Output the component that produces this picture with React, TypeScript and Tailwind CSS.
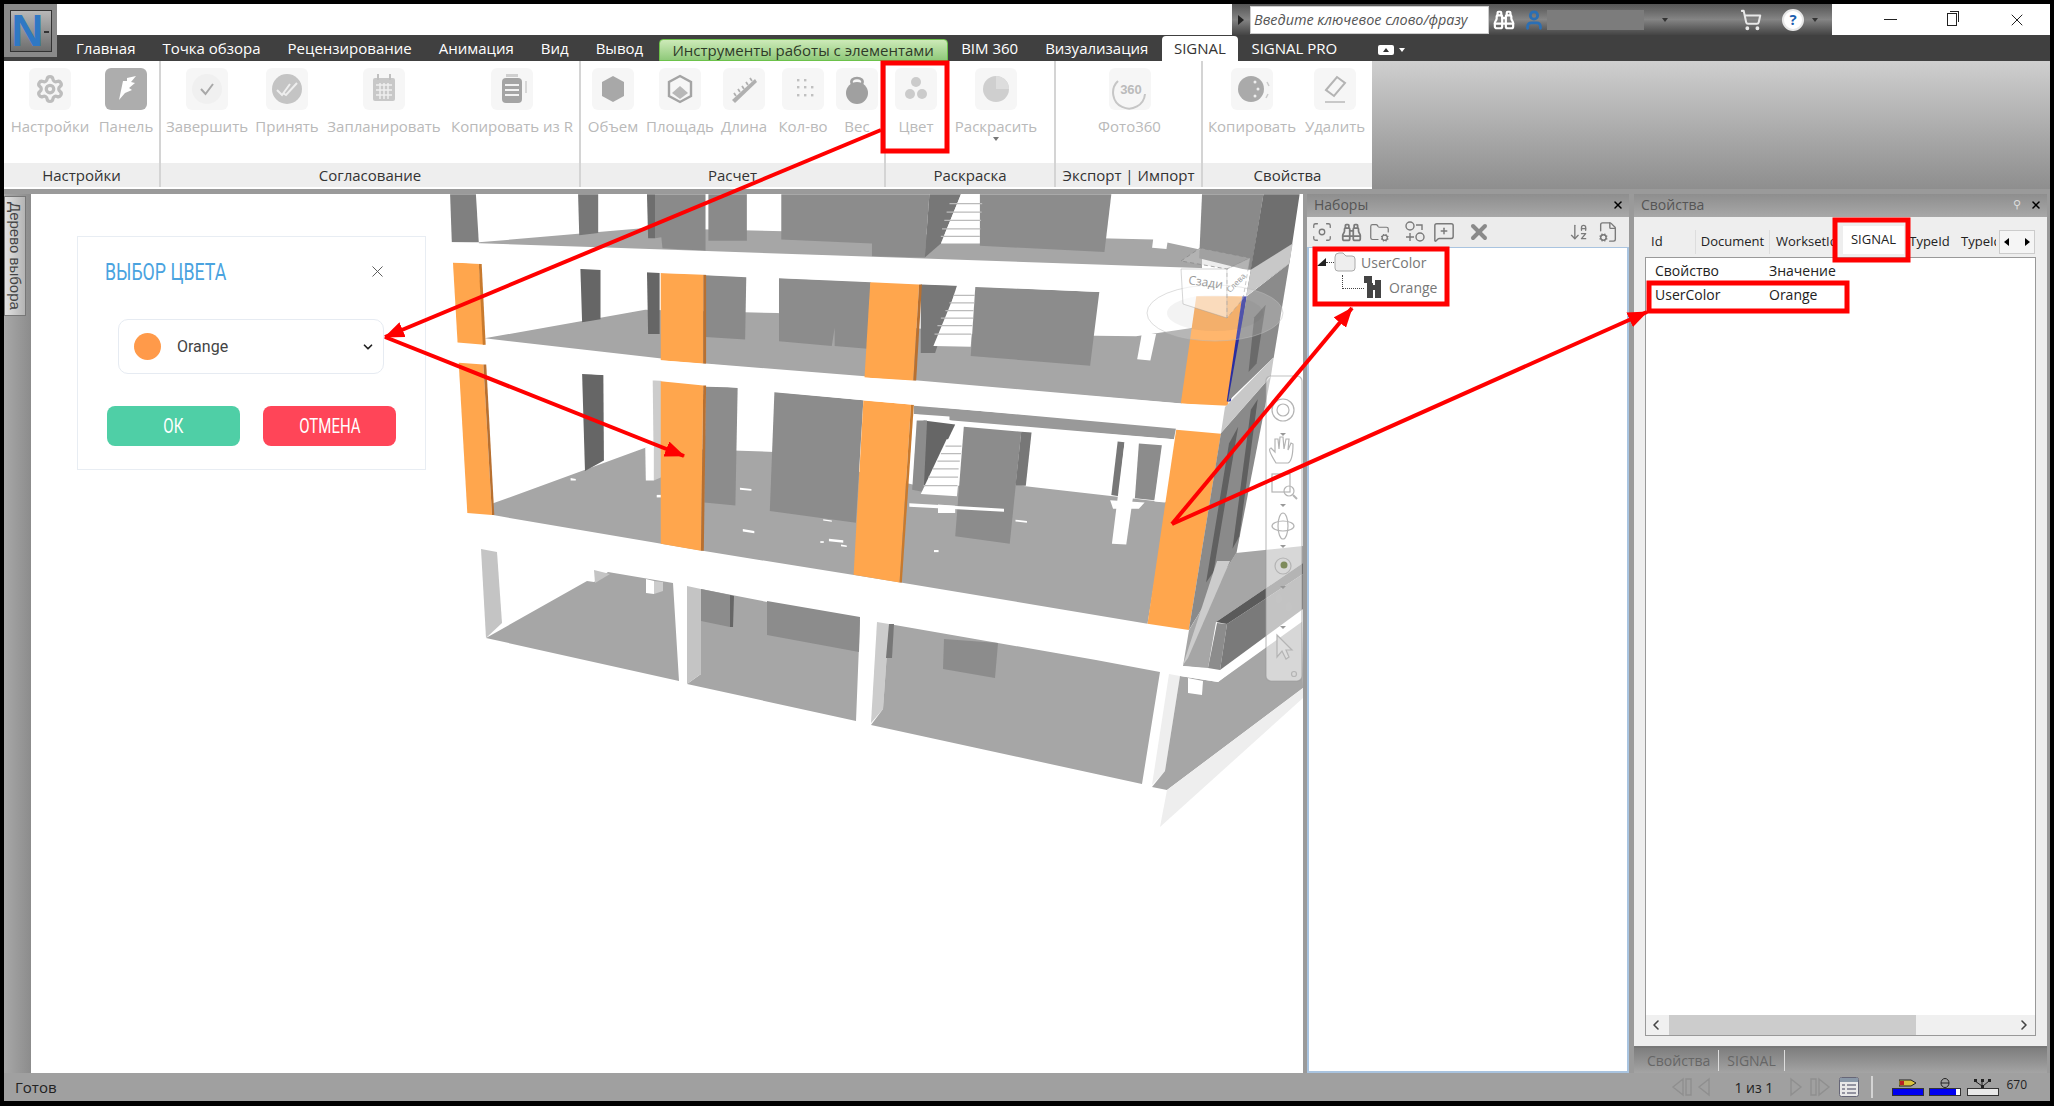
import { ArrowDownAZ, Binoculars, ChevronDown, ChevronLeft, ChevronRight, FileCog, Focus, FolderCog, MessageSquarePlus, Settings, ShoppingCart, User, X } from "lucide-react";

const leftTabs = ["Главная", "Точка обзора", "Рецензирование", "Анимация", "Вид", "Вывод"];

// upper floors are traced in a stretched space, see the transform on their <g>
const model: [string, string][] = [
    // top level
    ["#a6a6a6", "85,122 375,88 1260,115 1345,140 1345,190 85,140"],
    ["#808080", "35,8 80,8 85,122 38,122"],
    ["#777777", "258,8 293,8 293,100 260,105"],
    ["#6e6e6e", "378,8 392,8 392,112 380,112"],
    ["#8a8a8a", "392,8 480,8 480,142 405,136 403,110 392,112"],
    ["#8a8a8a", "485,8 552,8 552,118 485,118"],
    ["#8c8c8c", "612,8 870,8 862,158 770,155 770,125 612,115"],
    ["#777777", "870,8 925,8 890,125 862,158"],
    ["#ffffff", "925,8 965,8 958,125 890,125"],
    ["#8c8c8c", "958,8 1187,8 1175,145 958,130"],
    ["#ffffff", "1270,8 1298,8 1283,138 1258,135"],
    ["#8a8a8a", "1345,8 1452,8 1430,190 1340,160"],
    ["#6f6f6f", "1452,8 1515,8 1497,172 1420,250 1430,185"],
    // second level
    ["#a6a6a6", "95,350 375,282 605,290 940,340 1230,345 1330,325 1310,505 850,450 480,410"],
    ["#666666", "262,185 297,185 297,305 265,312"],
    ["#666666", "378,192 400,192 400,340 380,340"],
    ["#8a8a8a", "480,200 551,205 549,353 480,347"],
    ["#8c8c8c", "608,207 768,217 762,375 705,368 705,325 700,368 608,357"],
    ["#777777", "855,222 918,225 880,385 855,385"],
    ["#ffffff", "918,232 950,232 942,370 877,368"],
    ["#8c8c8c", "950,228 1166,240 1150,415 942,392"],
    ["#ffffff", "1240,340 1265,340 1255,403 1232,400"],
    ["#ffa64d", "40,170 85,172 95,365 48,360"],
    ["#c87a2e", "85,172 90,172 97,365 92,365"],
    ["#ffa64d", "402,195 476,197 476,410 402,402"],
    ["#b87030", "476,197 481,197 481,410 476,410"],
    ["#ffa64d", "767,217 852,222 842,450 757,443"],
    ["#b87030", "852,222 857,222 847,450 842,450"],
    ["#ffa64d", "1335,250 1415,250 1390,510 1308,505"],
    ["#2a2ea0", "1415,250 1423,250 1395,500 1388,500"],
    ["#8b8b8b", "1423,250 1497,172 1470,395 1390,500"],
    ["#6a6a6a", "1436,300 1456,270 1440,410 1426,430"],
    // first level
    ["#a6a6a6", "110,742 375,610 600,620 850,700 1030,700 1190,725 1285,740 1250,1028 820,930 475,855 110,770"],
    ["#666666", "265,435 302,437 303,640 270,665"],
    ["#cccccc", "388,450 403,450 403,680 390,688"],
    ["#ffffff", "375,610 390,605 390,688 376,688"],
    ["#8c8c8c", "480,465 536,467 532,747 478,740"],
    ["#8c8c8c", "600,478 755,497 742,788 592,760"],
    ["#999999", "843,510 1300,560 1296,590 910,545 843,530"],
    ["#ffffff", "843,530 905,536 905,548 843,542"],
    ["#ffffff", "905,548 1296,590 1296,600 905,556"],
    ["#666666", "860,545 915,555 860,710"],
    ["#8c8c8c", "848,545 866,545 860,715 840,710"],
    ["#ffffff", "900,590 928,590 918,725 855,720"],
    ["#8c8c8c", "930,560 1030,572 1010,838 915,820"],
    ["#777777", "1030,572 1048,574 1038,700 1020,700"],
    ["#777777", "1198,595 1210,597 1200,725 1187,722"],
    ["#ffffff", "1210,597 1238,600 1213,840 1188,838"],
    ["#8c8c8c", "1235,600 1275,604 1262,735 1228,730"],
    ["#ffffff", "1282,610 1296,600 1280,740 1262,738"],
    ["#ffffff", "1185,735 1245,740 1235,755 1190,755"],
    ["#ffffff", "835,742 1000,755 1000,762 835,750"],
    ["#ffffff", "885,745 915,748 915,765 885,765"],
    ["#ffffff", "245,682 254,684 254,688 245,688"],
    ["#ffffff", "395,722 404,722 404,728 395,728"],
    ["#ffffff", "540,705 560,708 560,712 540,710"],
    ["#ffffff", "545,803 565,808 565,813 545,809"],
    ["#ffffff", "695,826 720,830 720,836 695,832"],
    ["#ffffff", "680,832 686,832 686,836 680,836"],
    ["#ffffff", "716,840 726,842 726,846 716,844"],
    ["#ffffff", "685,780 700,783 700,786 685,783"],
    ["#ffffff", "1020,781 1040,784 1040,788 1020,785"],
    ["#ffffff", "878,853 886,853 886,858 878,858"],
    ["#ffa64d", "50,408 93,412 108,770 65,765"],
    ["#b87030", "93,412 98,412 112,770 108,770"],
    ["#ffa64d", "402,452 476,462 472,855 402,838"],
    ["#b87030", "476,462 481,462 477,855 472,855"],
    ["#ffa64d", "755,498 838,507 818,930 738,912"],
    ["#c87a2e", "838,507 843,507 822,930 818,930"],
    ["#ffa64d", "1300,567 1378,577 1322,1043 1250,1028"],
    ["#8a8a8a", "1378,575 1465,440 1405,860 1322,1043"],
    ["#606060", "1392,600 1408,560 1365,905 1352,930"],
    ["#5f5f5f", "1430,520 1442,495 1410,820 1398,850"],
    // slabs go over the columns
    ["#ffffff", "35,122 320,135 1430,187 1422,250 1165,240 765,215 400,195 40,170"],
    ["#c8c8c8", "1430,187 1503,125 1497,172 1422,250"],
    ["#ffffff", "45,362 400,402 757,443 1308,505 1385,513 1378,575 1300,565 760,498 400,450 50,405"],
    ["#c8c8c8", "1385,513 1470,395 1465,440 1378,575"],
];

// ground floor, in page pixels
const ground: [string, string][] = [
    ["#a6a6a6", "486,637 587,580 594,581 608,571 673,582 679,680"],
    ["#c4c4c4", "481,548 497,551 502,622 486,637"],
    ["#c4c4c4", "594,569 610,573 595,582"],
    ["#ffffff", "646,578 654,580 654,593 646,592"],
    ["#cccccc", "654,580 663,581 663,590 654,593"],
    ["#a6a6a6", "687,683 701,673 701,588 860,619 856,720"],
    ["#c4c4c4", "687,585 701,588 701,673 687,683"],
    ["#8c8c8c", "701,588 730,594 730,626 701,620"],
    ["#666666", "730,594 734,595 733,626 730,626"],
    ["#8c8c8c", "767,600 860,616 859,651 767,634"],
    ["#cccccc", "877,621 889,623 883,708 871,722"],
    ["#a6a6a6", "883,708 889,623 1096,659 1160,671 1142,783 871,724"],
    ["#777777", "889,623 894,623 892,657 886,657"],
    ["#8c8c8c", "944,638 998,642 995,677 943,668"],
    ["#eeeeee", "1169,673 1180,675 1165,770 1152,784"],
    ["#a6a6a6", "1180,675 1218,681 1302,615 1303,687 1167,789 1152,786 1165,770"],
    ["#eeeeee", "1167,789 1303,687 1303,697 1160,826"],
    ["#ffffff", "1188,677 1203,680 1202,694 1188,692"],
    ["#a6a6a6", "1236,552 1303,545 1303,562 1216,621 1208,667 1183,665 1189,629"],
    ["#cccccc", "1217,560 1230,560 1188,657 1183,664"],
    ["#ffffff", "1183,665 1220,669 1303,608 1303,620 1218,681 1180,675"],
    ["#8c8c8c", "1217,622 1227,623 1220,669 1208,667"],
    ["#7a7a7a", "1227,623 1303,573 1303,608 1220,669"],
    ["#5a5a5a", "1216,621 1303,562 1303,573 1227,623"],
];

// tread lines of the three flights of stairs
const stairLines = [
    "M905 30 H962 M900 50 H961 M896 70 H960 M892 90 H959 M890 108 H958",
    "M912 248 H949 M905 266 H948 M898 284 H947 M890 302 H946 M884 320 H945 M879 340 H943",
    "M898 606 H926 M890 624 H925 M884 642 H923 M876 660 H921 M868 680 H920 M860 700 H919",
];

const ribbon = [
    {
        title: "Настройки",
        box: "w-[157px] pl-3 gap-2",
        items: [
            { label: "Настройки", icon: "gear", w: "w-[68px]" },
            { label: "Панель", icon: "panel", w: "w-[68px]" },
        ],
    },
    {
        title: "Согласование",
        box: "w-[420px] pl-[5px] gap-[7px]",
        items: [
            { label: "Завершить", icon: "done", w: "w-[82px]" },
            { label: "Принять", icon: "accept", w: "w-[64px]" },
            { label: "Запланировать", icon: "calendar", w: "w-[116px]" },
            { label: "Копировать из R", icon: "clip", w: "w-[126px]" },
        ],
    },
    {
        title: "Расчет",
        box: "w-[305px] pl-[5px] gap-1",
        items: [
            { label: "Объем", icon: "hex", w: "w-[54px]" },
            { label: "Площадь", icon: "area", w: "w-[72px]" },
            { label: "Длина", icon: "ruler", w: "w-[48px]" },
            { label: "Кол-во", icon: "dots", w: "w-[62px]" },
            { label: "Вес", icon: "weight", w: "w-[38px]" },
        ],
    },
    {
        title: "Раскраска",
        box: "w-[170px] pl-1 gap-1",
        items: [
            { label: "Цвет", icon: "color", w: "w-[52px]" },
            { label: "Раскрасить", icon: "paint", w: "w-[100px]", more: true },
        ],
    },
    {
        title: "Экспорт | Импорт",
        box: "w-[147px] justify-center",
        items: [{ label: "Фото360", icon: "photo", w: "w-[90px]" }],
    },
    {
        title: "Свойства",
        box: "w-[169px] pl-1 gap-[3px]",
        items: [
            { label: "Копировать", icon: "copy", w: "w-[90px]" },
            { label: "Удалить", icon: "erase", w: "w-[70px]" },
        ],
    },
];

function RibbonIcon({ name }: { name: string }) {
    if (name === "gear") return <Settings size={30} strokeWidth={2.6} color="#bdbdbd" />;
    return (
        <svg width="42" height="42" viewBox="0 0 42 42">
            {name === "panel" && <path d="M14 32 L18 13 L22 13 L22 10 L31 8 L26 14 L30 15 L24 20 L27 22 L20 25 Z" fill="#ffffff" />}
            {name === "done" && (
                <>
                    <circle cx="21" cy="21" r="15" fill="#f0f0f0" />
                    <path d="M15 21 L19.5 26 L27 16" stroke="#a8a8a8" strokeWidth="2" fill="none" />
                </>
            )}
            {name === "accept" && (
                <>
                    <circle cx="21" cy="21" r="15" fill="#c4c4c4" />
                    <path d="M11 22 L16 27 L24 16 M17 25 L20 27 L31 15" stroke="#eeeeee" strokeWidth="2" fill="none" />
                </>
            )}
            {name === "calendar" && (
                <>
                    <rect x="10" y="10" width="22" height="23" rx="2" fill="#c8c8c8" />
                    <path d="M15 6 V12 M27 6 V12" stroke="#c0c0c0" strokeWidth="2" />
                    <path d="M13 17 H29 M13 22 H29 M13 27 H29 M17 15 V31 M21 15 V31 M25 15 V31" stroke="#eeeeee" strokeWidth="1.5" />
                </>
            )}
            {name === "clip" && (
                <>
                    <rect x="11" y="10" width="20" height="25" rx="4" fill="#a4a4a4" />
                    <rect x="15" y="6" width="12" height="3" fill="#d0d0d0" />
                    <path d="M14 17 H28 M14 22 H28 M14 27 H28" stroke="#f2f2f2" strokeWidth="2" />
                    <path d="M35 13 V25" stroke="#cccccc" strokeWidth="1.5" />
                </>
            )}
            {name === "hex" && <path d="M21 8 L32 14 V28 L21 34 L10 28 V14 Z" fill="#a8a8a8" />}
            {name === "area" && (
                <>
                    <path d="M21 8 L32 14 V28 L21 34 L10 28 V14 Z" fill="none" stroke="#a4a4a4" strokeWidth="2.4" />
                    <path d="M21 18 L29 25 L21 31 L13 25 Z" fill="#b8b8b8" />
                </>
            )}
            {name === "ruler" && (
                <>
                    <path d="M9 32 L32 11 L34 14 L12 35 Z" fill="#b0b0b0" />
                    <path d="M13 28 L11 25 M17 24 L15 21 M21 21 L19 18 M25 17 L23 14 M29 13 L27 10" stroke="#b0b0b0" strokeWidth="1.8" />
                </>
            )}
            {name === "dots" && (
                <g fill="#c0c0c0">
                    {[[15, 11], [22, 11], [15, 18], [22, 18], [29, 18], [15, 26], [22, 26], [29, 26]].map(([x, y]) => (
                        <rect key={`${x}-${y}`} x={x} y={y} width="2.4" height="2.4" />
                    ))}
                </g>
            )}
            {name === "weight" && (
                <>
                    <path d="M16 16 C12 8 30 8 26 16" fill="none" stroke="#a0a0a0" strokeWidth="2.6" />
                    <ellipse cx="21" cy="25" rx="11" ry="11" fill="#a0a0a0" />
                </>
            )}
            {name === "color" && (
                <g fill="#cbcbcb">
                    <circle cx="21" cy="14" r="5" />
                    <circle cx="15" cy="26" r="5" />
                    <circle cx="27" cy="26" r="5" />
                </g>
            )}
            {name === "paint" && (
                <>
                    <circle cx="21" cy="21" r="13" fill="#cfcfcf" />
                    <path d="M21 21 V8 A13 13 0 0 1 34 21 Z" fill="#dddddd" />
                </>
            )}
            {name === "photo" && (
                <>
                    <path d="M9 13 A16 16 0 1 0 36 26" fill="none" stroke="#c6c6c6" strokeWidth="2" />
                    <text x="22" y="26" textAnchor="middle" fontSize="13" fontWeight="700" fill="#bbbbbb" fontFamily="Liberation Sans, sans-serif">360</text>
                </>
            )}
            {name === "copy" && (
                <>
                    <circle cx="20" cy="21" r="13" fill="#aaaaaa" />
                    <circle cx="24" cy="14" r="1.5" fill="#eeeeee" />
                    <circle cx="27" cy="21" r="1.5" fill="#eeeeee" />
                    <circle cx="24" cy="28" r="1.5" fill="#eeeeee" />
                    <path d="M36 14 L38 18 M37 26 L35 30" stroke="#cccccc" strokeWidth="1.5" />
                </>
            )}
            {name === "erase" && (
                <>
                    <path d="M12 22 L23 9 L31 15 L20 28 Z" fill="none" stroke="#b4b4b4" strokeWidth="2" />
                    <path d="M11 34 H31" stroke="#c8c8c8" strokeWidth="2" />
                </>
            )}
        </svg>
    );
}

function Ribbon() {
    return (
        <div className="flex h-[128px] shrink-0">
            <div className="flex bg-white pb-[2px]">
                {ribbon.map((group) => (
                    <div key={group.title} className={`flex flex-col border-r-2 border-[#d4d4d4] last:border-r-0 ${group.box.split(" ")[0]}`}>
                        <div className={`flex flex-1 pt-[7px] ${group.box}`}>
                            {group.items.map((item) => (
                                <div key={item.label} className={`flex flex-col items-center ${item.w}`}>
                                    <div className={`flex h-[42px] w-[42px] items-center justify-center rounded-md ${item.icon === "panel" ? "bg-[#adadad]" : "bg-[#f6f6f6]"}`}>
                                        <RibbonIcon name={item.icon} />
                                    </div>
                                    <span className="mt-[6px] whitespace-nowrap text-[15px] leading-5 text-[#b9b9b9]">{item.label}</span>
                                    {"more" in item && <span className="mt-[1px] h-0 w-0 border-x-[3px] border-t-[4px] border-x-transparent border-t-[#777]" />}
                                </div>
                            ))}
                        </div>
                        <div className="flex h-[24px] items-center justify-center whitespace-nowrap bg-[#eeeeee] text-[15px] text-[#333]">{group.title}</div>
                    </div>
                ))}
            </div>
            <div className="flex-1 bg-linear-to-b from-[#cfcfcf] to-[#8e8e8e]" />
        </div>
    );
}

function TitleBar() {
    return (
        <div className="flex h-[31px] shrink-0">
            <div className="flex-1 bg-white" />
            <div className="flex w-[600px] items-center bg-linear-to-b from-[#555] via-[#858585] to-[#444]">
                <span className="mx-[6px] h-0 w-0 border-y-[5px] border-l-[6px] border-y-transparent border-l-[#222]" />
                <div className="flex h-[28px] w-[239px] items-center whitespace-nowrap border border-[#ccc] bg-white pl-[3px] text-[14.4px] italic text-[#555]">Введите ключевое слово/фразу</div>
                <Binoculars size={22} className="ml-[4px] text-white" strokeWidth={2.4} />
                <User size={22} className="ml-[8px] text-[#2a6fb5]" strokeWidth={3} />
                <div className="ml-[2px] h-[20px] w-[97px] bg-[#7c7c7c]" />
                <span className="ml-[18px] h-0 w-0 border-x-[3px] border-t-[4px] border-x-transparent border-t-[#333]" />
                <ShoppingCart size={22} className="ml-[72px] text-[#e8e8e8]" strokeWidth={2.2} />
                <span className="ml-[20px] flex h-[22px] w-[22px] items-center justify-center rounded-full border-2 border-[#e8e8e8] bg-white text-[15px] font-bold text-[#1d5fb0]">?</span>
                <span className="ml-[8px] h-0 w-0 border-x-[3px] border-t-[4px] border-x-transparent border-t-[#333]" />
            </div>
            <div className="flex w-[218px] items-center bg-white pl-[52px] text-[#222]">
                <span className="h-[1.5px] w-[13px] bg-[#222]" />
                <span className="relative ml-[50px] h-[13px] w-[10px] border border-[#222] before:absolute before:-right-[3px] before:-top-[3px] before:h-[11px] before:w-[9px] before:border-r before:border-t before:border-[#222]" />
                <X size={20} className="ml-[50px]" strokeWidth={1.2} />
            </div>
        </div>
    );
}

function TabBar() {
    return (
        <div className="flex h-[26px] shrink-0 items-end bg-[#404040] pl-[58.5px] text-[15px] text-white">
            {leftTabs.map((t) => (
                <div key={t} className="flex h-[25px] items-center whitespace-nowrap px-[13.5px]">{t}</div>
            ))}
            <div className="ml-[2px] flex h-[22px] w-[289px] items-center justify-center whitespace-nowrap rounded-t-sm border border-[#6cc24a] bg-linear-to-b from-[#cdeab8] to-[#8fc97a] text-[#2e3a28]">Инструменты работы с элементами</div>
            <div className="flex h-[25px] items-center whitespace-nowrap px-[13.5px]">BIM 360</div>
            <div className="flex h-[25px] items-center px-[13.5px]">Визуализация</div>
            <div className="flex h-[25px] w-[76px] items-center justify-center rounded-t-sm bg-white text-[#333]">SIGNAL</div>
            <div className="flex h-[25px] items-center whitespace-nowrap px-[13.5px]">SIGNAL PRO</div>
            <div className="ml-[27px] mb-[6px] flex items-center gap-[5px]">
                <span className="flex h-[10px] w-[16px] items-center justify-center rounded-[2px] bg-white">
                    <span className="h-0 w-0 border-x-[3px] border-b-[4px] border-x-transparent border-b-[#333]" />
                </span>
                <span className="h-0 w-0 border-x-[3px] border-t-[4px] border-x-transparent border-t-white" />
            </div>
        </div>
    );
}

function NavBar() {
    const caret = (y: number) => <path d={`M1280 ${y} h6 l-3 3 z`} fill="#999" stroke="none" />;
    return (
        <g fill="none" stroke="#b4b4b4" strokeWidth="1.2">
            <rect x="1266" y="375" width="36" height="305" rx="5" fill="#ffffff" fillOpacity="0.55" stroke="#999999" strokeOpacity="0.6" />
            <circle cx="1283" cy="409" r="11" />
            <circle cx="1283" cy="409" r="6" />
            <path d="M1276 462 C1270 452 1268 448 1271 447 L1275 451 L1275 438 L1278 438 L1279 448 L1280 436 L1283 436 L1284 448 L1286 438 L1289 438 L1288 449 L1291 442 L1293 443 C1293 452 1292 460 1288 462 Z" fill="#ffffff" />
            <rect x="1272" y="473" width="18" height="18" fill="#ffffff" fillOpacity="0.6" />
            <circle cx="1289" cy="490" r="5" />
            <path d="M1293 494 L1297 498" strokeWidth="2" />
            <ellipse cx="1283" cy="525" rx="5" ry="13" />
            <ellipse cx="1283" cy="525" rx="11" ry="5" />
            <circle cx="1283" cy="565" r="8" fill="#d8d8d8" />
            <circle cx="1284" cy="564" r="3.5" fill="#7e8b5c" stroke="none" />
            <ellipse cx="1279" cy="598" rx="3" ry="5" fill="#c4c4c4" stroke="none" />
            <ellipse cx="1289" cy="606" rx="3" ry="5" fill="#c4c4c4" stroke="none" />
            <path d="M1277 634 L1277 656 L1282 650 L1286 658 L1289 656 L1286 649 L1292 649 Z" fill="#dddddd" />
            <circle cx="1294" cy="673" r="2.5" />
            {caret(432)}
            {caret(503)}
            {caret(544)}
            {caret(585)}
            {caret(625)}
        </g>
    );
}

function ViewCube() {
    return (
        <g>
            <ellipse cx="1215" cy="312" rx="68" ry="28" fill="#ffffff" fillOpacity="0.18" stroke="#bbbbbb" strokeOpacity="0.5" />
            <ellipse cx="1215" cy="312" rx="48" ry="18" fill="#555555" fillOpacity="0.07" />
            <path d="M1181 260 L1200 247 L1250 257 L1227 268 Z" fill="#cccccc" fillOpacity="0.35" stroke="#888888" strokeOpacity="0.7" strokeDasharray="4 3" />
            <path d="M1181 268 L1227 268 L1227 317 L1183 303 Z" fill="#ffffff" fillOpacity="0.55" stroke="#999999" strokeOpacity="0.4" />
            <path d="M1227 268 L1250 257 L1243 298 L1227 317 Z" fill="#ffffff" fillOpacity="0.35" stroke="#999999" strokeOpacity="0.5" strokeDasharray="4 3" />
            <text x="1188" y="283" fontSize="12" fill="#999999" transform="rotate(8 1188 283)">Сзади</text>
            <text x="1230" y="292" fontSize="8" fill="#999999" transform="rotate(-45 1230 292)">Слева</text>
        </g>
    );
}

function Viewer() {
    return (
        <div className="relative w-[1272px] overflow-hidden bg-white">
            <svg className="absolute left-0 top-0" width="1272" height="880" viewBox="31 193 1272 880">
                <g transform="translate(430 190) scale(0.574 0.4209)">
                    {model.map(([fill, points], i) => (
                        <polygon key={i} points={points} fill={fill} />
                    ))}
                    {stairLines.map((d) => (
                        <path key={d} d={d} stroke="#bbbbbb" strokeWidth="3" fill="none" />
                    ))}
                </g>
                {ground.map(([fill, points], i) => (
                    <polygon key={i} points={points} fill={fill} />
                ))}
                <ViewCube />
                <NavBar />
            </svg>
            <div className="absolute left-[46px] top-[42px] w-[349px] border border-[#e8edf3] bg-white px-[27px] pb-[23px] font-['Roboto',sans-serif]">
                <div className="flex h-[72px] items-center justify-between pb-[3px] pr-[11px]">
                    <span className="origin-left scale-x-[0.74] whitespace-nowrap text-[24px] text-[#4aa3df]">ВЫБОР ЦВЕТА</span>
                    <X size={19} strokeWidth={1.2} className="text-[#555]" />
                </div>
                <div className="ml-[13px] mt-[10px] flex h-[55px] w-[266px] items-center rounded-[10px] border border-[#e6ebf2] pl-[15px] pr-[8px]">
                    <span className="h-[27px] w-[27px] rounded-full bg-[#ff9a4a]" />
                    <span className="ml-[16px] flex-1 text-[16px] text-[#444]">Orange</span>
                    <ChevronDown size={14} strokeWidth={3} className="text-[#222]" />
                </div>
                <div className="mt-[32px] flex gap-[23px] pl-[2px]">
                    <div className="flex h-[40px] w-[133px] items-center justify-center rounded-[8px] bg-[#4fcfa6] text-[20px] text-white"><span className="scale-x-[0.75]">ОК</span></div>
                    <div className="flex h-[40px] w-[133px] items-center justify-center rounded-[8px] bg-[#ff4558] text-[20px] text-white"><span className="scale-x-[0.75]">ОТМЕНА</span></div>
                </div>
            </div>
        </div>
    );
}

function PanelHead({ title, pin }: { title: string; pin?: boolean }) {
    return (
        <div className="flex h-[23px] shrink-0 items-center bg-linear-to-b from-[#8e8e8e] to-[#a8a8a8] pb-[2px] pl-[7px] pr-[5px] text-[14px] text-[#555]">
            <span className="flex-1">{title}</span>
            {pin && <span className="mr-[9px] text-[11px] text-[#ddd]">⚲</span>}
            <X size={12} strokeWidth={3} className="text-black" />
        </div>
    );
}

function SetsPanel() {
    return (
        <div className="flex w-[322px] flex-col">
            <PanelHead title="Наборы" />
            <div className="flex h-[30px] shrink-0 items-center bg-[#ececec] pl-[4px] text-[#7a7a7a]">
                <Focus size={22} strokeWidth={1.4} />
                <Binoculars size={21} strokeWidth={2} className="ml-[8px]" />
                <FolderCog size={21} strokeWidth={1.4} className="ml-[7px]" />
                <svg width="21" height="22" viewBox="0 0 21 22" fill="none" stroke="currentColor" strokeWidth="1.4" className="ml-[15px]">
                    <circle cx="5" cy="5" r="4" />
                    <circle cx="15" cy="16" r="4" />
                    <path d="M11 4 H17 V9 M1 16 H9 M5 12 V20" />
                </svg>
                <MessageSquarePlus size={22} strokeWidth={1.6} className="ml-[7px]" />
                <X size={24} strokeWidth={4} className="ml-[12px] text-[#8a8a8a]" />
                <ArrowDownAZ size={20} strokeWidth={1.6} className="ml-[78px]" />
                <FileCog size={22} strokeWidth={1.5} className="ml-[8px]" />
            </div>
            <div className="flex-1 border-x-2 border-b-2 border-t border-[#a9c4e0] bg-white text-[14px] text-[#777]">
                <div className="ml-[8px] mt-[4px] flex h-[20px] items-center">
                    <span className="h-0 w-0 border-b-[8px] border-l-[9px] border-b-[#222] border-l-transparent" />
                    <span className="w-[8px] border-t border-dotted border-[#444]" />
                    <svg width="22" height="20" viewBox="0 0 22 20" fill="#eeeeee" stroke="#aaaaaa">
                        <path d="M1 5 Q1 1 5 1 H9 L12 4 H18 Q21 4 21 7 V16 Q21 19 18 19 H4 Q1 19 1 16 Z" />
                    </svg>
                    <span className="ml-[5px]">UserColor</span>
                </div>
                <div className="ml-[33px] mt-[4px] flex h-[22px] items-center">
                    <span className="mb-[10px] h-[14px] w-[22px] border-b border-l border-dotted border-[#444]" />
                    <svg width="20" height="22" viewBox="0 0 20 22" fill="#444444">
                        <rect x="0" y="0" width="8" height="7" />
                        <rect x="3" y="7" width="6" height="15" />
                        <rect x="11" y="4" width="6" height="18" />
                        <rect x="9" y="9" width="2" height="5" />
                    </svg>
                    <span className="ml-[5px]">Orange</span>
                </div>
            </div>
        </div>
    );
}

function PropsPanel() {
    return (
        <div className="ml-[5px] flex w-[413px] flex-col">
            <PanelHead title="Свойства" pin />
            <div className="flex flex-1 flex-col border-b-2 border-[#777] bg-[#eeeeee] px-[11px] pb-[10px] pt-[9px] text-[13px] text-[#222]">
                <div className="flex h-[28px] shrink-0 items-end">
                    <div className="flex h-[24px] w-[50px] items-center pl-[6px]">Id</div>
                    <div className="flex h-[24px] w-[74px] items-center justify-center border-l border-[#ddd]">Document</div>
                    <div className="flex h-[24px] w-[67px] items-center overflow-hidden whitespace-nowrap border-l border-[#ddd] pl-[6px]">WorksetId</div>
                    <div className="ml-[7px] flex h-[28px] w-[61px] items-center justify-center bg-white">SIGNAL</div>
                    <div className="flex h-[24px] w-[51px] items-center justify-center">TypeId</div>
                    <div className="mr-[3px] flex h-[24px] w-[41px] items-center overflow-hidden whitespace-nowrap pl-[6px]">TypeId</div>
                    <div className="flex h-[24px] w-[36px] items-center justify-between border border-[#ccc] bg-[#f5f5f5] px-[4px]">
                        <span className="h-0 w-0 border-y-[4px] border-r-[5px] border-y-transparent border-r-black" />
                        <span className="h-0 w-0 border-y-[4px] border-l-[5px] border-y-transparent border-l-black" />
                    </div>
                </div>
                <div className="mt-[3px] flex flex-1 flex-col border border-[#999] bg-white text-[14px]">
                    <div className="flex h-[24px] shrink-0 items-center pl-[9px]">
                        <span className="w-[114px]">Свойство</span>
                        <span>Значение</span>
                    </div>
                    <div className="flex h-[24px] shrink-0 items-center pl-[9px]">
                        <span className="w-[114px]">UserColor</span>
                        <span>Orange</span>
                    </div>
                    <div className="flex-1" />
                    <div className="flex h-[20px] shrink-0 items-center bg-[#f0f0f0] text-[#444]">
                        <ChevronLeft size={16} strokeWidth={2.4} className="ml-[2px]" />
                        <div className="ml-[5px] h-full w-[247px] bg-[#cccccc]" />
                        <div className="flex-1" />
                        <ChevronRight size={16} strokeWidth={2.4} className="mr-[3px]" />
                    </div>
                </div>
            </div>
            <div className="flex h-[25px] shrink-0 items-center bg-linear-to-b from-[#7e7e7e] to-[#a4a4a4] pl-[13px] text-[14px] text-[#666]">
                <span className="border-r border-[#ddd] pr-[8px]">Свойства</span>
                <span className="border-r border-[#ddd] px-[8px]">SIGNAL</span>
            </div>
        </div>
    );
}

function StatusBar() {
    return (
        <div className="flex h-[28px] shrink-0 items-center bg-[#a0a0a0] pl-[11px] text-[15px] text-[#222]">
            <span className="flex-1">Готов</span>
            <svg width="40" height="20" viewBox="0 0 40 20" fill="none" stroke="#8f8f8f" strokeWidth="1.4">
                <path d="M12 2 L2 10 L12 18 Z M15 2 H20 V18 H15 Z M38 2 L28 10 L38 18 Z" />
            </svg>
            <span className="ml-[23px] w-[39px] whitespace-nowrap text-[14px]">1 из 1</span>
            <svg width="42" height="20" viewBox="0 0 42 20" fill="none" stroke="#8f8f8f" strokeWidth="1.4" className="ml-[16px]">
                <path d="M2 2 L12 10 L2 18 Z M22 2 H27 V18 H22 Z M30 2 L40 10 L30 18 Z" />
            </svg>
            <svg width="20" height="20" viewBox="0 0 20 20" className="ml-[8px]">
                <rect x="0.5" y="0.5" width="19" height="19" rx="2" fill="#e8e8e8" stroke="#667" />
                <rect x="1" y="1" width="18" height="4" fill="#8a98a8" />
                <path d="M3 8 H6 M8 8 H17 M3 12 H6 M8 12 H17 M3 16 H6 M8 16 H17" stroke="#778" strokeWidth="1.5" />
            </svg>
            <span className="ml-[12px] h-[22px] w-[2px] bg-[#d4d4d4]" />
            <div className="ml-[19px] flex flex-col items-center">
                <svg width="18" height="8" viewBox="0 0 18 8"><path d="M0 1 H12 L17 4 L12 7 H0 Z" fill="#d9c23c" stroke="#222" /><rect x="1" y="2" width="4" height="4" fill="#b22" /></svg>
                <span className="mt-[1px] h-[8px] w-[32px] border border-[#333] bg-[#0000f0]" />
            </div>
            <div className="ml-[5px] flex flex-col items-center">
                <svg width="12" height="10" viewBox="0 0 12 10" fill="none" stroke="#222"><ellipse cx="6" cy="5" rx="4" ry="4.5" /><path d="M2 5 H10" /></svg>
                <span className="h-[8px] w-[32px] border border-[#333] bg-[#0000f0] pl-[26px]"><span className="block h-full w-[4px] bg-white" /></span>
            </div>
            <div className="ml-[6px] flex flex-col items-center">
                <svg width="18" height="9" viewBox="0 0 18 9" fill="#222"><rect x="0" y="0" width="3" height="3" /><rect x="7" y="0" width="3" height="3" /><rect x="14" y="0" width="3" height="3" /><rect x="7" y="6" width="3" height="3" /><path d="M1 2 L8 7 M8 2 V7 M15 2 L9 7" stroke="#222" /></svg>
                <span className="h-[8px] w-[32px] border border-[#333] bg-[#e8e8e8]" />
            </div>
            <span className="ml-[7px] mr-[23px] mb-[5px] text-[12px]">670</span>
        </div>
    );
}

export default function App() {
    return (
        <div className="relative flex h-[1106px] w-[2054px] flex-col overflow-hidden bg-black pb-[5px] pl-[4px] pr-[4px] pt-[4px] font-['Open_Sans',sans-serif]">
            <TitleBar />
            <TabBar />
            <Ribbon />
            <div className="h-[5px] shrink-0 bg-[#9a9a9a]" />
            <div className="flex min-h-0 flex-1 bg-[#9a9a9a]">
                <div className="w-[27px] shrink-0 bg-linear-to-r from-[#a8a8a8] to-[#8c8c8c]">
                    <div className="mt-[2px] flex h-[120px] w-[22px] justify-center border border-[#777] bg-linear-to-r from-[#e2e2e2] to-[#b4b4b4] font-['Liberation_Sans',sans-serif] text-[15px] leading-[20px] text-[#444] [writing-mode:vertical-rl]">Дерево выбора</div>
                </div>
                <Viewer />
                <div className="w-[4px] shrink-0" />
                <SetsPanel />
                <PropsPanel />
            </div>
            <StatusBar />

            {/* logo sits over the tab row */}
            <div className="absolute left-[4px] top-[4px] flex h-[53px] w-[53px] items-center justify-center bg-[#8a8a8a]">
                <div className="flex h-[42px] w-[42px] items-center justify-center gap-[1px] border border-[#333] bg-linear-to-b from-[#b8b8b8] to-[#6e6e6e] font-['Liberation_Sans',sans-serif] text-[44px] font-bold leading-none text-[#2f78c4]">
                    N
                    <span className="mt-[2px] h-[2px] w-[5px] bg-[#333]" />
                </div>
            </div>

            {/* callouts from the author of the screenshot */}
            <svg className="pointer-events-none absolute left-0 top-0" width="2054" height="1106" viewBox="0 0 2054 1106" fill="none" stroke="#ff0000" strokeWidth="4">
                <defs>
                    <marker id="head" markerUnits="userSpaceOnUse" markerWidth="20" markerHeight="16" refX="19" refY="8" orient="auto">
                        <path d="M0 0 L20 8 L0 16 Z" fill="#ff0000" stroke="none" />
                    </marker>
                </defs>
                <rect x="883" y="63" width="64" height="88" strokeWidth="5" />
                <rect x="1315" y="249" width="132" height="55" strokeWidth="5" />
                <rect x="1835" y="220" width="73" height="40" strokeWidth="5" />
                <rect x="1649" y="283" width="198" height="28" strokeWidth="5" />
                <path d="M881 130 L385 337" markerEnd="url(#head)" />
                <path d="M385 337 L684 456" markerEnd="url(#head)" />
                <path d="M1172 524 L1352 308" markerEnd="url(#head)" />
                <path d="M1172 524 L1647 312" markerEnd="url(#head)" />
            </svg>
        </div>
    );
}
